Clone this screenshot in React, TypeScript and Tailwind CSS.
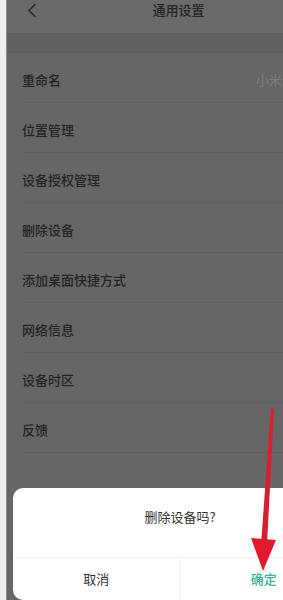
import React from "react";

const rows = [
  "重命名",
  "位置管理",
  "设备授权管理",
  "删除设备",
  "添加桌面快捷方式",
  "网络信息",
  "设备时区",
  "反馈",
];

export default function App() {
  return (
    <div
      className="relative w-[283px] h-[600px] overflow-hidden bg-[#f0f0f0] flex"
      style={{ fontFamily: '"Noto Sans CJK SC", "Noto Sans", sans-serif' }}
    >
      <div className="w-[6px] shrink-0 bg-[#ededed]" />
      <div className="w-[1px] shrink-0 bg-[#8e8e8e]" />
      <div className="relative w-[343px] shrink-0 h-[600px] bg-[#666666] flex flex-col">
        {/* header */}
        <div className="relative h-[33px] bg-[#6a6a6a] flex items-start justify-center pt-[1px]">
          <svg
            className="absolute left-[20px] top-[3px]"
            width="10"
            height="15"
            viewBox="0 0 10 15"
            fill="none"
          >
            <path d="M8.5 1 L2 7.5 L8.5 14" stroke="#2a2a2a" strokeWidth="1.6" />
          </svg>
          <span className="text-[13px] leading-[18px] text-[#262626] font-medium">通用设置</span>
        </div>
        <div className="h-[20px] bg-[#616161]" />
        {/* list */}
        <div className="flex flex-col">
          {rows.map((r, i) => (
            <div key={r} className="h-[50px] pl-[15px] flex flex-col">
              <div className="flex-1 flex items-center justify-between pt-[4px]">
                <span className="text-[13px] text-[#242424] font-medium">{r}</span>
                {i === 0 && (
                  <span className="text-[13px] text-[#7f7f7f] pr-[68px]">小米</span>
                )}
              </div>
              <div className="h-[1px] bg-[#5f5f5f]" />
            </div>
          ))}
        </div>
        {/* dialog */}
        <div className="absolute left-[6px] top-[488px] w-[334px] h-[112px] bg-white rounded-[10px] flex flex-col">
          <div className="h-[69px] flex items-center justify-center pb-[11px]">
            <span className="text-[13px] text-[#333333]">删除设备吗?</span>
          </div>
          <div className="h-[1px] bg-[#f2f2f2]" />
          <div className="flex-1 flex">
            <div className="flex-1 flex items-center justify-center">
              <span className="text-[13px] text-[#333333]">取消</span>
            </div>
            <div className="w-[1px] bg-[#f2f2f2]" />
            <div className="flex-1 flex items-center justify-center">
              <span className="text-[13px] text-[#35b48a] font-medium">确定</span>
            </div>
          </div>
        </div>
      </div>
      {/* red arrow annotation */}
      <svg
        className="absolute left-0 top-0 pointer-events-none"
        width="283"
        height="600"
        viewBox="0 0 283 600"
      >
        <polygon points="271,408 274,409 267,545 261,545" fill="#d81f2d" />
        <polygon points="251,538 276,540 263,571" fill="#e01a2b" />
      </svg>
    </div>
  );
}
